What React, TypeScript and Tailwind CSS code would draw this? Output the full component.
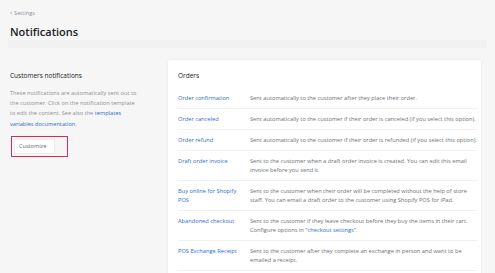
import React from "react";

const rows: { label: string; desc: React.ReactNode }[] = [
  { label: "Order confirmation", desc: "Sent automatically to the customer after they place their order." },
  { label: "Order canceled", desc: "Sent automatically to the customer if their order is canceled (if you select this option)." },
  { label: "Order refund", desc: "Sent automatically to the customer if their order is refunded (if you select this option)." },
  { label: "Draft order invoice", desc: "Sent to the customer when a draft order invoice is created. You can edit this email invoice before you send it." },
  { label: "Buy online for Shopify POS", desc: "Sent to the customer when their order will be completed without the help of store staff. You can email a draft order to the customer using Shopify POS for iPad." },
  {
    label: "Abandoned checkout",
    desc: (
      <>
        Sent to the customer if they leave checkout before they buy the items in their cart. Configure options in{" "}
        <span className="text-[#2c6ecb]">"checkout settings"</span>.
      </>
    ),
  },
  { label: "POS Exchange Receipt", desc: "Sent to the customer after they complete an exchange in person and want to be emailed a receipt." },
];

export default function App() {
  return (
    <div
      className="w-[495px] h-[273px] bg-[#f6f6f7] overflow-hidden text-[#202223]"
      style={{ fontFamily: '"Open Sans", "Noto Sans", sans-serif' }}
    >
      <div className="px-[10px] pt-[9px]">
        <div className="flex items-center gap-[2px] text-[5.6px] text-[#8c9196] leading-[8px]">
          <span className="text-[7px]">‹</span>
          <span>Settings</span>
        </div>
        <div className="mt-[8px] text-[11px] font-semibold leading-[14px] text-[#202223]">Notifications</div>
      </div>
      <div className="mx-[8px] mt-[1px] h-[8px] bg-[#f1f1f2]" />
      <div className="flex pl-[10px] pt-[12px] gap-[23px]">
        <div className="w-[135px] shrink-0 pt-[10.5px]">
          <div className="text-[6.5px] leading-[9px] text-[#202223]">Customers notifications</div>
          <p className="mt-[8px] w-[131px] text-[5.65px] leading-[10.4px] text-[#8c9196]">
            These notifications are automatically sent out to the customer. Click on the notification template to edit the content. See also the{" "}
            <span className="text-[#2c6ecb]">templates variables documentation</span>.
          </p>
          <div className="mt-[7px] ml-[1px] w-[57px] h-[21px] border-[1.5px] border-[#d72c58] p-[2px]">
            <div className="h-full w-[41px] bg-white border border-[#ececec] flex items-center pl-[4px] text-[5.6px] text-[#5c5f62]">
              Customize
            </div>
          </div>
        </div>
        <div className="w-[313px] bg-white shadow-[0_0_2px_rgba(0,0,0,0.08)] rounded-[2px] pl-[10px] pr-[4px] pt-[10.5px] pb-[6px]">
          <div className="text-[6.5px] leading-[9px] text-[#202223]">Orders</div>
          <div className="mt-[8.5px]">
            {rows.map((r, i) => (
              <div key={i} className="flex border-b border-[#f1f1f1] py-[5.5px] text-[5.7px] leading-[9px]">
                <div className="w-[72px] shrink-0 pr-[12px] text-[#2c6ecb]">{r.label}</div>
                <div className="flex-1 text-[#6d7175]">{r.desc}</div>
              </div>
            ))}
          </div>
        </div>
      </div>
    </div>
  );
}
